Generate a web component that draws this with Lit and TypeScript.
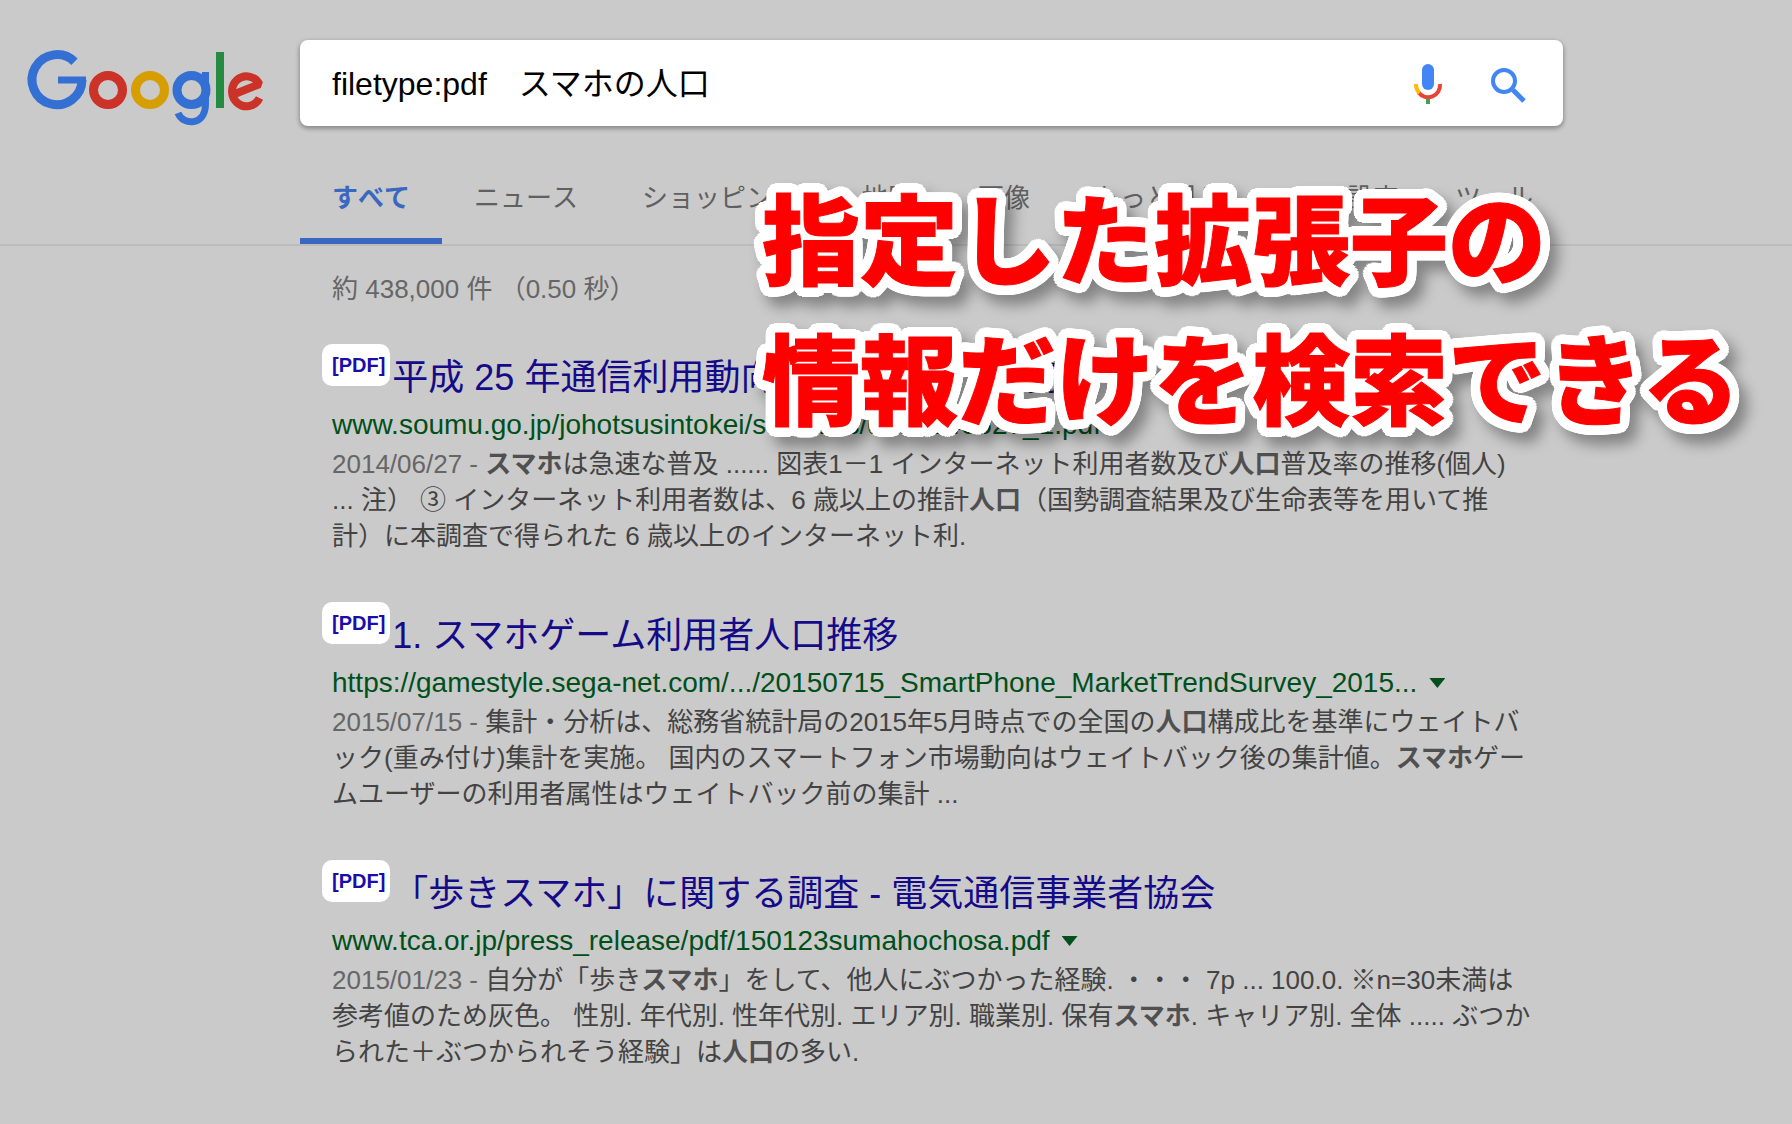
import { LitElement, html, css, svg, unsafeCSS } from "lit";
import { customElement } from "lit/decorators.js";

interface Result {
  title: string;
  url: string;
  date: string;
  lines: unknown[];
}

const tabs = ["すべて", "ニュース", "ショッピング", "地図", "画像", "もっと見る"];
const tools = ["設定", "ツール"];

const results: Result[] = [
  {
    title: "平成 25 年通信利用動向調査の結果 - 総務省",
    url: "www.soumu.go.jp/johotsusintokei/statistics/data/140627_1.pdf",
    date: "2014/06/27 - ",
    lines: [
      html`<b>スマホ</b>は急速な普及 ...... 図表1－1 インターネット利用者数及び<b>人口</b>普及率の推移(個人)`,
      html`... 注） ③ インターネット利用者数は、6 歳以上の推計<b>人口</b>（国勢調査結果及び生命表等を用いて推`,
      html`計）に本調査で得られた 6 歳以上のインターネット利.`,
    ],
  },
  {
    title: "1. スマホゲーム利用者人口推移",
    url: "https://gamestyle.sega-net.com/.../20150715_SmartPhone_MarketTrendSurvey_2015...",
    date: "2015/07/15 - ",
    lines: [
      html`集計・分析は、総務省統計局の2015年5月時点での全国の<b>人口</b>構成比を基準にウェイトバ`,
      html`ック(重み付け)集計を実施。 国内のスマートフォン市場動向はウェイトバック後の集計値。<b>スマホ</b>ゲー`,
      html`ムユーザーの利用者属性はウェイトバック前の集計 ...`,
    ],
  },
  {
    title: "「歩きスマホ」に関する調査 - 電気通信事業者協会",
    url: "www.tca.or.jp/press_release/pdf/150123sumahochosa.pdf",
    date: "2015/01/23 - ",
    lines: [
      html`自分が「歩き<b>スマホ</b>」をして、他人にぶつかった経験. ・・・ 7p ... 100.0. ※n=30未満は`,
      html`参考値のため灰色。 性別. 年代別. 性年代別. エリア別. 職業別. 保有<b>スマホ</b>. キャリア別. 全体 ..... ぶつか`,
      html`られた＋ぶつかられそう経験」は<b>人口</b>の多い.`,
    ],
  },
];

const logo = svg`
  <g fill="none" stroke-width="9">
    <path stroke="#3470d4" d="M74.500 41.800A25 25 0 1 0 82 60" />
    <path stroke="#3470d4" stroke-width="7" d="M58 60H86" />
    <circle cx="108" cy="70" r="14.500" stroke="#cb3228" />
    <circle cx="150" cy="70" r="14.500" stroke="#d69e00" />
    <circle cx="191.500" cy="70" r="14.500" stroke="#3470d4" />
    <path stroke="#3470d4" stroke-width="7" d="M205.500 52V84C205.500 106 183 106 178 93" />
    <path stroke="#258b40" stroke-width="8" d="M220 32V88" />
    <path stroke="#cb3228" stroke-width="8" stroke-linejoin="bevel" d="M231 75.500L259.300 64.200A14.500 15 0 1 0 259.500 78" />
  </g>`;

/* White outline with rounded corners: solid copies of the text on two rings. */
const ring = (radius: number, count: number) =>
  Array.from({ length: count }, (_, i) => {
    const a = (2 * Math.PI * i) / count;
    return `${(radius * Math.cos(a)).toFixed(1)}px ${(radius * Math.sin(a)).toFixed(1)}px 0 #fff`;
  });
const outline = unsafeCSS([...ring(10, 36), ...ring(5, 16)].join(","));

@customElement("search-result")
export class SearchResult extends LitElement {
  static properties = { result: { attribute: false } };
  declare result: Result;

  static styles = css`
    :host {
      display: block;
    }
    .heading {
      display: flex;
      align-items: flex-start;
      margin: 0;
      font-size: 36px;
      line-height: 52px;
      font-weight: 400;
      white-space: nowrap;
    }
    .badge {
      flex: none;
      margin: 0 2px 0 -10px;
      padding: 0 5px 0 10px;
      border-radius: 10px;
      background: #fff;
      color: #1a0dab;
      font-size: 20px;
      line-height: 42px;
      font-weight: 700;
    }
    .title {
      padding-top: 8px;
      color: #150a88;
      text-decoration: none;
    }
    .source {
      display: flex;
      align-items: center;
      gap: 12px;
      color: #00501b;
      font-size: 28px;
      line-height: 42px;
      white-space: nowrap;
    }
    .url {
      font-style: normal;
    }
    .more {
      width: 16px;
      height: 10px;
      padding: 0;
      border: 0;
      background: #00501b;
      clip-path: polygon(0 0, 100% 0, 50% 100%);
    }
    .snippet {
      margin: 0;
      color: #434343;
      font-size: 26px;
      line-height: 36px;
      white-space: nowrap;
    }
    .line {
      display: block;
    }
    .date {
      color: #666;
    }
    b {
      color: #505050;
    }
  `;

  render() {
    const { title, url, date, lines } = this.result;
    return html`
      <h3 class="heading">
        <span class="badge">[PDF]</span><a class="title" href="#">${title}</a>
      </h3>
      <div class="source">
        <cite class="url">${url}</cite>
        <button class="more" aria-label="メニュー"></button>
      </div>
      <p class="snippet">
        ${lines.map(
          (line, i) =>
            html`<span class="line">${i === 0 ? html`<span class="date">${date}</span>` : null}${line}</span>`
        )}
      </p>
    `;
  }
}

@customElement("app-root")
export class AppRoot extends LitElement {
  static styles = css`
    :host {
      display: block;
      position: relative;
      box-sizing: border-box;
      min-height: 100vh;
      overflow: hidden;
      background: #cacaca;
      font-family: "Liberation Sans", "Noto Sans CJK JP", sans-serif;
    }
    .header {
      display: grid;
      grid-template-columns: 300px minmax(0, 1263px);
      padding-top: 40px;
      border-bottom: 2px solid #bcbcbc;
    }
    .logo {
      display: block;
      width: 300px;
      height: 106px;
      margin-top: -20px;
    }
    .search {
      display: flex;
      align-items: center;
      box-sizing: border-box;
      height: 86px;
      padding: 0 36px 0 32px;
      border-radius: 8px;
      background: #fff;
      box-shadow: 0 2px 4px 1px rgba(0, 0, 0, 0.3);
    }
    .query {
      flex: 1;
      min-width: 0;
      padding: 0 0 4px;
      border: 0;
      outline: 0;
      background: none;
      color: #000;
      font: inherit;
      font-size: 32px;
    }
    .icon {
      display: block;
      padding: 0;
      border: 0;
      background: none;
    }
    .icon + .icon {
      margin-left: 39px;
    }
    .icon svg {
      display: block;
      width: 40px;
      height: 44px;
    }
    .nav {
      grid-column: 2;
      display: flex;
      justify-content: space-between;
      margin-top: 28px;
      font-size: 26px;
      line-height: 80px;
      font-kerning: none;
      white-space: nowrap;
    }
    .group {
      display: flex;
    }
    .tab {
      padding: 4px 32px 0;
      color: #606060;
      text-decoration: none;
      border-bottom: 6px solid transparent;
    }
    .tab.active {
      color: #3a68c0;
      font-weight: 700;
      border-color: #3a68c0;
    }
    .tools {
      gap: 56px;
      padding-right: 30px;
    }
    .tools .tab {
      padding: 4px 0 0;
    }
    .main {
      padding: 22px 32px 40px 332px;
    }
    .stats {
      margin: 0 0 34px;
      color: #666;
      font-size: 26px;
      line-height: 42px;
    }
    .results {
      display: grid;
      gap: 48px;
    }
    .caption {
      position: absolute;
      top: 164px;
      left: 762px;
      margin: 0;
      color: #f00;
      font-family: "Noto Sans CJK JP", sans-serif;
      font-size: 98px;
      line-height: 140px;
      font-weight: 900;
      white-space: nowrap;
      -webkit-text-stroke: 1px #f00;
      text-shadow: ${outline};
      filter: drop-shadow(8px 10px 7px rgba(0, 0, 0, 0.35));
    }
  `;

  render() {
    return html`
      <header class="header">
        <svg class="logo" viewBox="0 0 300 106" role="img" aria-label="Google">
          <g transform="translate(0 0)">${logo}</g>
        </svg>
        <form class="search" role="search">
          <input class="query" type="text" aria-label="検索" value="filetype:pdf　スマホの人口" />
          <button class="icon" type="button" aria-label="音声検索">
            <svg viewBox="0 -1 40 44">
              <rect x="14" y="2" width="12" height="26" rx="6" fill="#4285f4" />
              <g fill="none" stroke-width="4">
                <path stroke="#34a853" d="M20 35V42" />
                <path stroke="#ea4335" d="M10.500 30.500A12 12 0 0 0 32 22" />
                <path stroke="#fbbc05" d="M8 22A12 12 0 0 0 11.500 31" />
              </g>
            </svg>
          </button>
          <button class="icon" type="button" aria-label="検索">
            <svg viewBox="0 -1 40 44">
              <g fill="none" stroke="#4285f4" stroke-width="4">
                <circle cx="17" cy="19" r="11" />
                <path d="M26 28L37 39" stroke-width="5" />
              </g>
            </svg>
          </button>
        </form>
        <nav class="nav">
          <div class="group">
            ${tabs.map((t, i) => html`<a class="tab ${i === 0 ? "active" : ""}" href="#">${t}</a>`)}
          </div>
          <div class="group tools">${tools.map((t) => html`<a class="tab" href="#">${t}</a>`)}</div>
        </nav>
      </header>
      <main class="main">
        <p class="stats">約 438,000 件 （0.50 秒）</p>
        <div class="results">
          ${results.map((r) => html`<search-result .result=${r}></search-result>`)}
        </div>
      </main>
      <p class="caption">指定した拡張子の<br />情報だけを検索できる</p>
    `;
  }
}
